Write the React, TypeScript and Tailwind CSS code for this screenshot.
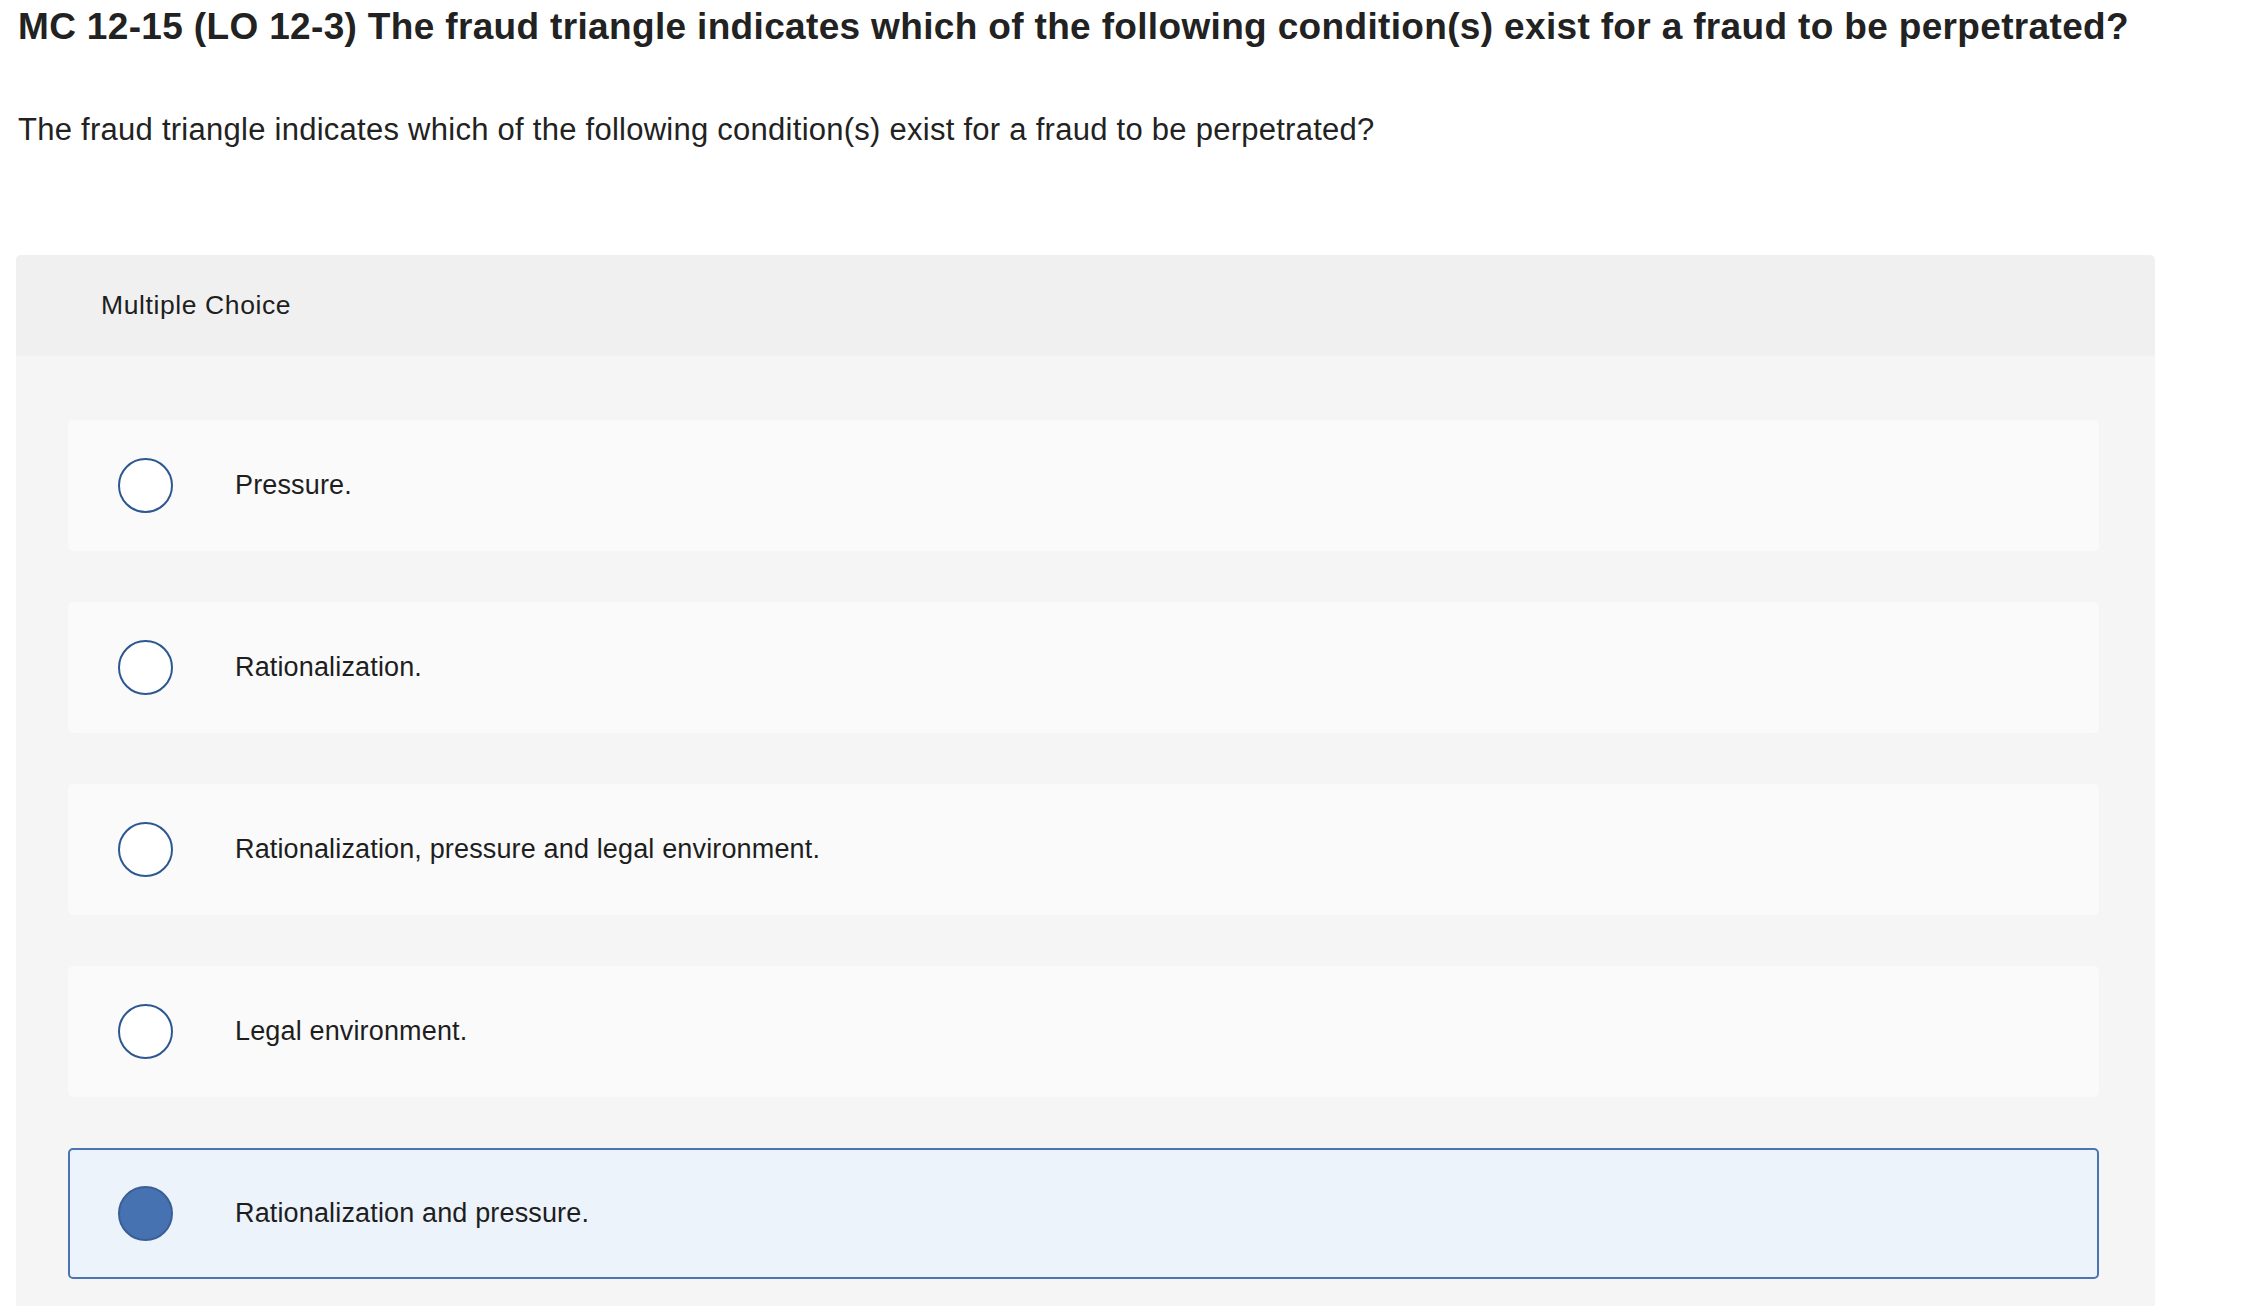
import { useState } from 'react';

const choices = [
  'Pressure.',
  'Rationalization.',
  'Rationalization, pressure and legal environment.',
  'Legal environment.',
  'Rationalization and pressure.',
];

export default function App() {
  const [selected, setSelected] = useState(4);

  return (
    <div className="min-h-screen bg-white text-[#222] font-['Liberation_Sans',Arial,sans-serif]">
      <div className="pl-[18px] pr-[16px] pt-[8px]">
        {/* Question heading */}
        <h1 className="text-[37px] leading-none font-bold tracking-[0.34px] whitespace-nowrap">
          MC 12-15 (LO 12-3) The fraud triangle indicates which of the following condition(s) exist for a fraud to be perpetrated?
        </h1>
        <p className="mt-[69px] text-[31px] leading-none tracking-[0.26px] whitespace-nowrap">
          The fraud triangle indicates which of the following condition(s) exist for a fraud to be perpetrated?
        </p>
      </div>

      {/* Answer card */}
      <div className="ml-[16px] mt-[110px] w-[2139px] rounded-t-[5px] bg-[#f5f5f5] overflow-hidden">
        <div className="h-[101px] bg-[#f0f0f0] pl-[85px] flex items-center">
          <span className="text-[26.5px] tracking-[0.6px] text-[#1e1e1e]">Multiple Choice</span>
        </div>

        <div className="pl-[52px] pr-[56px] pt-[64px] pb-[52px] flex flex-col gap-[51px]">
          {choices.map((choice, i) => {
            const active = selected === i;
            return (
              <button
                key={choice}
                onClick={() => setSelected(i)}
                className={`h-[131px] w-full rounded-[5px] flex items-center pl-[48px] text-left border-2 ${
                  active ? 'bg-[#ecf3fb] border-[#4a74b3]' : 'bg-[#fafafa] border-transparent'
                }`}
              >
                <span
                  className={`w-[55px] h-[55px] shrink-0 rounded-full border-2 ${
                    active ? 'bg-[#4672b1] border-[#3a5f96]' : 'bg-white border-[#2d5791]'
                  }`}
                />
                <span className="ml-[62px] text-[27px] tracking-[0.15px] text-[#1e1e1e]">{choice}</span>
              </button>
            );
          })}
        </div>
      </div>
    </div>
  );
}
